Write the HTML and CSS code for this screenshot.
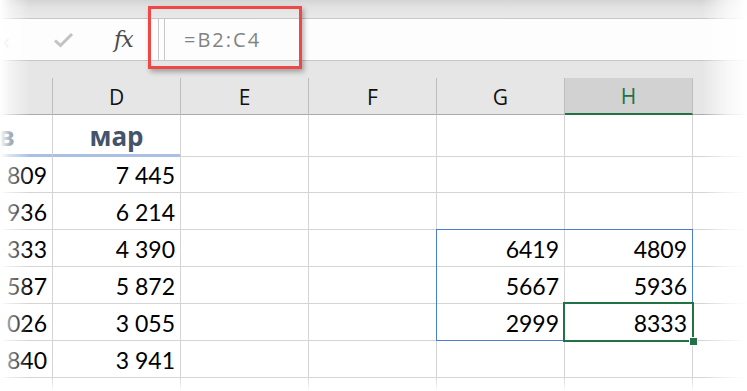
FILE: index.html
```html
<!DOCTYPE html>
<html lang="ru">

<head>
    <meta charset="utf-8">
    <meta name="viewport" content="width=device-width, initial-scale=1.0">
    <title>Excel - =B2:C4</title>
    <link rel="stylesheet" href="styles.css">
</head>

<body>
    <div class="screen">
        <div class="ribbon-edge"></div>

        <div class="fbar">
            <div class="fbar-tools">
                <span class="arrow">‹</span>
                <svg class="check" width="21" height="16" viewBox="0 0 21 16">
                    <path d="M2 8.5 L7.5 13.5 L19 2" fill="none" stroke="#c2c2c2" stroke-width="3"/>
                </svg>
                <span class="fx">fx</span>
            </div>
            <div class="fbar-input">=B2:C4</div>
        </div>

        <div class="colbar">
            <div class="colheads">
                <div class="colhead">C</div>
                <div class="colhead">D</div>
                <div class="colhead">E</div>
                <div class="colhead">F</div>
                <div class="colhead">G</div>
                <div class="colhead selected">H</div>
                <div class="colhead">I</div>
            </div>
        </div>

        <div class="grid">
            <div class="row first">
                <div class="cell title">фев</div>
                <div class="cell title">мар</div>
                <div class="cell"></div>
                <div class="cell"></div>
                <div class="cell"></div>
                <div class="cell"></div>
                <div class="cell"></div>
            </div>
            <div class="row">
                <div class="cell">4&nbsp;809</div>
                <div class="cell">7&nbsp;445</div>
                <div class="cell"></div>
                <div class="cell"></div>
                <div class="cell"></div>
                <div class="cell"></div>
                <div class="cell"></div>
            </div>
            <div class="row">
                <div class="cell">5&nbsp;936</div>
                <div class="cell">6&nbsp;214</div>
                <div class="cell"></div>
                <div class="cell"></div>
                <div class="cell"></div>
                <div class="cell"></div>
                <div class="cell"></div>
            </div>
            <div class="row">
                <div class="cell">8&nbsp;333</div>
                <div class="cell">4&nbsp;390</div>
                <div class="cell"></div>
                <div class="cell"></div>
                <div class="cell">6419</div>
                <div class="cell">4809</div>
                <div class="cell"></div>
            </div>
            <div class="row">
                <div class="cell">6&nbsp;587</div>
                <div class="cell">5&nbsp;872</div>
                <div class="cell"></div>
                <div class="cell"></div>
                <div class="cell">5667</div>
                <div class="cell">5936</div>
                <div class="cell"></div>
            </div>
            <div class="row">
                <div class="cell">3&nbsp;026</div>
                <div class="cell">3&nbsp;055</div>
                <div class="cell"></div>
                <div class="cell"></div>
                <div class="cell">2999</div>
                <div class="cell">8333</div>
                <div class="cell"></div>
            </div>
            <div class="row">
                <div class="cell">5&nbsp;840</div>
                <div class="cell">3&nbsp;941</div>
                <div class="cell"></div>
                <div class="cell"></div>
                <div class="cell"></div>
                <div class="cell"></div>
                <div class="cell"></div>
            </div>
            <div class="row">
                <div class="cell"></div>
                <div class="cell"></div>
                <div class="cell"></div>
                <div class="cell"></div>
                <div class="cell"></div>
                <div class="cell"></div>
                <div class="cell"></div>
            </div>
        </div>

        <!-- selection and callout drawn over the sheet -->
        <div class="range"></div>
        <div class="active"><span class="handle"></span></div>
        <div class="callout"></div>

        <div class="fade fade-left"></div>
        <div class="fade fade-right"></div>
        <div class="fade fade-bottom"></div>
    </div>
</body>

</html>
```

FILE: styles.css
```css
body {
    margin: 0;
    background: #fff;
}

.screen {
    position: relative;
    width: 747px;
    height: 391px;
    overflow: hidden;
    background: #fff;
}

.ribbon-edge {
    height: 18px;
    background: linear-gradient(#d4d4d4, #e2e2e2 40%, #e9e9e9);
}

/* formula bar */
.fbar {
    display: flex;
    height: 41px;
    border-top: 1px solid #c6c6c6;
    border-bottom: 1px solid #c6c6c6;
    background: #fdfdfd;
}

.fbar-tools {
    box-sizing: border-box;
    width: 159px;
    display: flex;
    align-items: center;
    border-right: 1px solid #c8c8c8;
}

.arrow {
    width: 50px;
    padding-left: 3px;
    box-sizing: border-box;
    font-family: "Open Sans", sans-serif;
    font-size: 22px;
    color: #d6d6d6;
    line-height: 1;
}

.check {
    margin-left: 3px;
    margin-top: 1px;
}

.fx {
    margin-left: 40px;
    font-family: "DejaVu Serif", serif;
    font-style: italic;
    font-size: 22px;
    color: #4a4a4a;
    letter-spacing: -1px;
}

.fbar-input {
    flex: 1;
    margin-left: 5px;
    padding-left: 19px;
    border-left: 1px solid #c8c8c8;
    display: flex;
    align-items: center;
    font-family: "Open Sans", sans-serif;
    font-size: 20px;
    letter-spacing: 2px;
    color: #838383;
}

/* column headers */
.colbar {
    box-sizing: border-box;
    height: 54px;
    padding-top: 17px;
    background: #e6e6e6;
}

.colheads {
    display: grid;
    grid-template-columns: repeat(7, 128px);
    margin-left: -75px;
    height: 37px;
}

.colhead {
    box-sizing: border-box;
    border-right: 1px solid #bdbdbd;
    border-bottom: 1px solid #ababab;
    display: flex;
    align-items: center;
    justify-content: center;
    font-family: "Open Sans", sans-serif;
    font-size: 21px;
    color: #111;
    padding-top: 1px;
}

.colhead.selected {
    background: #d2d2d2;
    color: #217346;
    border-bottom: 2px solid #217346;
}

/* cells */
.grid {
    margin-left: -75px;
}

.row {
    display: grid;
    grid-template-columns: repeat(7, 128px);
    height: 37px;
}

.row.first {
    height: 41px;
}

.cell {
    box-sizing: border-box;
    border-right: 1px solid #d4d4d4;
    border-bottom: 1px solid #d4d4d4;
    display: flex;
    align-items: center;
    justify-content: flex-end;
    padding: 1px 5px 0 0;
    font-family: Lato, "Open Sans", sans-serif;
    font-size: 23px;
    color: #000;
    white-space: nowrap;
}

.cell.title {
    justify-content: center;
    padding: 3px 0 0;
    font-family: "Open Sans", sans-serif;
    font-weight: bold;
    font-size: 26px;
    color: #44546a;
    border-bottom: 3px solid #a9bfe4;
}

/* overlays */
.range {
    position: absolute;
    left: 436px;
    top: 229px;
    width: 255px;
    height: 110px;
    border: 1px solid #4a7dd6;
}

.active {
    position: absolute;
    left: 563px;
    top: 302px;
    width: 127px;
    height: 36px;
    border: 2px solid #217346;
}

.handle {
    position: absolute;
    right: -6px;
    bottom: -6px;
    width: 7px;
    height: 7px;
    background: #217346;
    border: 1px solid #fff;
}

.callout {
    position: absolute;
    left: 148px;
    top: 6px;
    width: 148px;
    height: 57px;
    border: 3px solid #ef4646;
    box-shadow: 2px 3px 5px rgba(0, 0, 0, 0.3);
}

.fade {
    position: absolute;
}

.fade-left {
    left: 0;
    top: 0;
    bottom: 0;
    width: 30px;
    background: linear-gradient(to right, #fff, rgba(255, 255, 255, 0.55) 10px, rgba(255, 255, 255, 0));
}

.fade-right {
    right: 0;
    top: 0;
    bottom: 0;
    width: 45px;
    background: linear-gradient(to right, rgba(255, 255, 255, 0), rgba(255, 255, 255, 0.7) 25px, #fff);
}

.fade-bottom {
    left: 0;
    right: 0;
    bottom: 0;
    height: 14px;
    background: linear-gradient(rgba(255, 255, 255, 0), #fff);
}
```
